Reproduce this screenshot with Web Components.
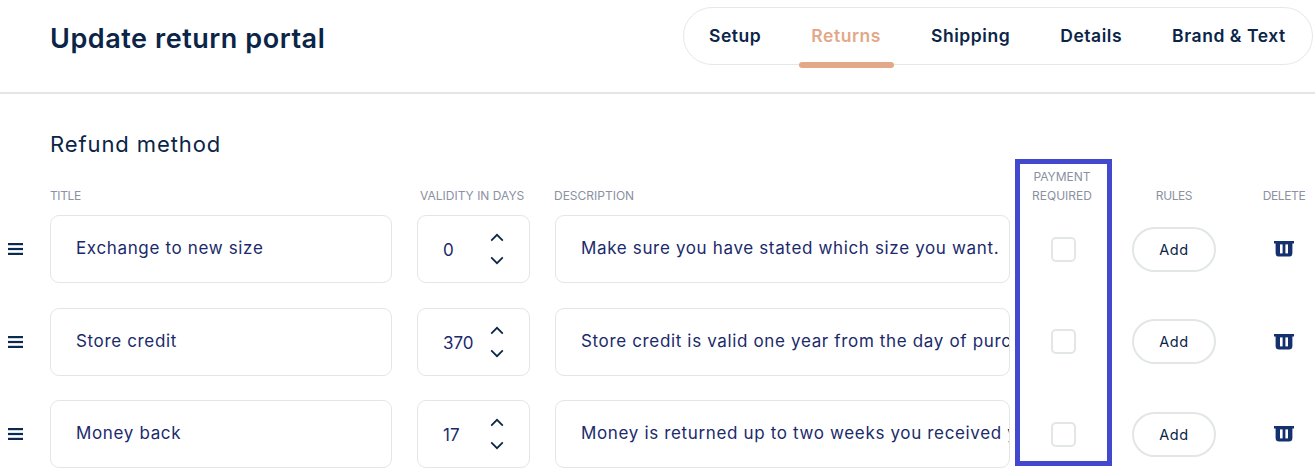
<!DOCTYPE html>
<html lang="en">
<head>
<meta charset="utf-8">
<title>Update return portal</title>
<style>
  html, body { margin: 0; height: 475px; overflow: hidden; background: #fff; }
  body { font-family: Inter, "Liberation Sans", sans-serif; color: #0a2547; }
</style>
</head>
<body>
<portal-page>
  <portal-header slot="header" heading="Update return portal">
    <tab-item>Setup</tab-item>
    <tab-item active>Returns</tab-item>
    <tab-item>Shipping</tab-item>
    <tab-item>Details</tab-item>
    <tab-item>Brand &amp; Text</tab-item>
  </portal-header>
  <refund-table heading="Refund method">
    <refund-row name="Exchange to new size" days="0" description="Make sure you have stated which size you want."></refund-row>
    <refund-row name="Store credit" days="370" description="Store credit is valid one year from the day of purchase"></refund-row>
    <refund-row name="Money back" days="17" description="Money is returned up to two weeks you received your return"></refund-row>
  </refund-table>
</portal-page>

<script>
const COLUMNS = '25px 342px 113px 455px 57px 114px 56px'

const ICONS = {
  handle: `<svg width="15" height="12" viewBox="0 0 15 12" fill="#0a2a52"><rect y="0" width="15" height="2.2"/><rect y="4.9" width="15" height="2.2"/><rect y="9.8" width="15" height="2.2"/></svg>`,
  up: `<svg width="14" height="9" viewBox="0 0 14 9" fill="none" stroke="#0a2547" stroke-width="1.7"><path d="M1.2 7.6 7 1.8l5.8 5.8"/></svg>`,
  down: `<svg width="14" height="9" viewBox="0 0 14 9" fill="none" stroke="#0a2547" stroke-width="1.7"><path d="M1.2 1.4 7 7.2l5.8-5.8"/></svg>`,
  trash: `<svg width="20" height="16" viewBox="0 0 20 16"><path fill="#15306f" d="M0 0h20v2.4h-1.6V12a3.6 3.6 0 0 1-3.6 3.6H5.2A3.6 3.6 0 0 1 1.6 12V2.4H0z"/><rect x="6" y="3.4" width="2.6" height="9" fill="#fff"/><rect x="11.4" y="3.4" width="2.6" height="9" fill="#fff"/></svg>`
}

class PortalPage extends HTMLElement {
  constructor() {
    super()
    this.attachShadow({ mode: 'open' }).innerHTML = `
      <style>
        :host { display: block; position: relative; width: 1315px; height: 475px; overflow: hidden; }
        .highlight {
          position: absolute; left: 1015px; top: 159px;
          width: 97px; height: 307px; box-sizing: border-box;
          border: 5px solid #4349cf; pointer-events: none;
        }
      </style>
      <slot name="header"></slot>
      <slot></slot>
      <div class="highlight"></div>
    `
  }
}

class PortalHeader extends HTMLElement {
  constructor() {
    super()
    this.attachShadow({ mode: 'open' }).innerHTML = `
      <style>
        :host {
          display: flex; align-items: flex-start; justify-content: space-between;
          box-sizing: border-box; height: 94px; padding: 7px 2px 0 50px;
          border-bottom: 2px solid #e4e6e6;
        }
        h1 { margin: 0; padding-top: 15px; font-size: 27px; line-height: 34px; font-weight: 600; letter-spacing: .55px; color: #0a2547; }
        nav {
          display: flex; gap: 50px; box-sizing: border-box; height: 58px; width: 630px;
          padding: 0 25px; border: 1px solid #e6e8e8; border-radius: 29px; background: #fff;
        }
      </style>
      <h1></h1>
      <nav><slot></slot></nav>
    `
    this.shadowRoot.querySelector('h1').textContent = this.getAttribute('heading')
  }
}

class TabItem extends HTMLElement {
  constructor() {
    super()
    this.attachShadow({ mode: 'open' }).innerHTML = `
      <style>
        :host {
          display: block; position: relative; height: 56px; line-height: 56px;
          font-size: 17.5px; font-weight: 600; letter-spacing: .55px; color: #0a2547; white-space: nowrap;
        }
        :host([active]) { color: #e3a888; }
        :host([active])::after {
          content: ''; position: absolute; left: -12px; right: -13px; top: 54px;
          height: 6px; border-radius: 3px; background: #e3a888;
        }
      </style>
      <slot></slot>
    `
  }
}

class RefundTable extends HTMLElement {
  constructor() {
    super()
    this.attachShadow({ mode: 'open' }).innerHTML = `
      <style>
        :host { display: block; padding-top: 34px; }
        h2 { margin: 0 0 0 50px; font-size: 22px; line-height: 32px; font-weight: 400; letter-spacing: .9px; color: #0a2547; }
        .labels {
          display: grid; grid-template-columns: ${COLUMNS}; column-gap: 25px; align-items: end;
          height: 44px; margin-top: 1px; margin-bottom: 10px;
          font-size: 12px; line-height: 19px; color: #8b90a3; white-space: nowrap;
        }
        .labels span { text-align: center; justify-self: center; }
        .labels .left { justify-self: start; text-align: left; }
        .labels .tight { letter-spacing: -.4px; }
        .labels .validity { margin-left: 3px; }
        .labels .desc { margin-left: -1px; }
        .labels .pay { margin-left: -3px; }
        .rows { display: flex; flex-direction: column; gap: 24.5px; }
      </style>
      <h2></h2>
      <div class="labels">
        <i></i>
        <span class="left tight">TITLE</span>
        <span class="left validity">VALIDITY IN DAYS</span>
        <span class="left desc">DESCRIPTION</span>
        <span class="pay">PAYMENT<br>REQUIRED</span>
        <span class="tight">RULES</span>
        <span class="tight">DELETE</span>
      </div>
      <div class="rows"><slot></slot></div>
    `
    this.shadowRoot.querySelector('h2').textContent = this.getAttribute('heading')
  }
}

class RefundRow extends HTMLElement {
  constructor() {
    super()
    const root = this.attachShadow({ mode: 'open' })
    root.innerHTML = `
      <style>
        :host {
          display: grid; grid-template-columns: ${COLUMNS}; column-gap: 25px; align-items: center;
          height: 68px; font-size: 17px; letter-spacing: .65px; color: #1b2a6b;
        }
        .handle { margin-left: 8px; display: flex; }
        .box {
          box-sizing: border-box; height: 68px; display: flex; align-items: center;
          border: 1px solid #e4e6e6; border-radius: 9px; background: #fff; overflow: hidden;
          white-space: nowrap;
        }
        .text { padding: 0 0 2px 25px; }
        .stepper { padding-left: 25px; position: relative; color: #1b2a6b; letter-spacing: 0; }
        .value { padding-top: 2px; }
        .arrows {
          position: absolute; left: 72px; top: 0; bottom: 0;
          display: flex; flex-direction: column; justify-content: center; gap: 14px;
        }
        .arrows svg { display: block; }
        .check {
          justify-self: center; box-sizing: border-box; width: 25px; height: 25px;
          border: 2px solid #e3e6e6; border-radius: 5px; background: #fff;
        }
        .add {
          justify-self: center; box-sizing: border-box; width: 84px; height: 45px;
          border: 2px solid #e3e6e6; border-radius: 23px; background: #fff;
          font: 400 14.5px Inter, "Liberation Sans", sans-serif; letter-spacing: .5px; color: #0a2547; padding: 0;
        }
        .delete { justify-self: center; display: flex; margin-left: -1px; }
      </style>
      <span class="handle">${ICONS.handle}</span>
      <div class="box text name"></div>
      <div class="box stepper">
        <span class="value"></span>
        <span class="arrows">${ICONS.up}${ICONS.down}</span>
      </div>
      <div class="box text description"></div>
      <span class="check"></span>
      <button class="add">Add</button>
      <span class="delete">${ICONS.trash}</span>
    `
    root.querySelector('.name').textContent = this.getAttribute('name')
    root.querySelector('.value').textContent = this.getAttribute('days')
    root.querySelector('.description').textContent = this.getAttribute('description')
  }
}

customElements.define('portal-page', PortalPage)
customElements.define('portal-header', PortalHeader)
customElements.define('tab-item', TabItem)
customElements.define('refund-table', RefundTable)
customElements.define('refund-row', RefundRow)
</script>
</body>
</html>
